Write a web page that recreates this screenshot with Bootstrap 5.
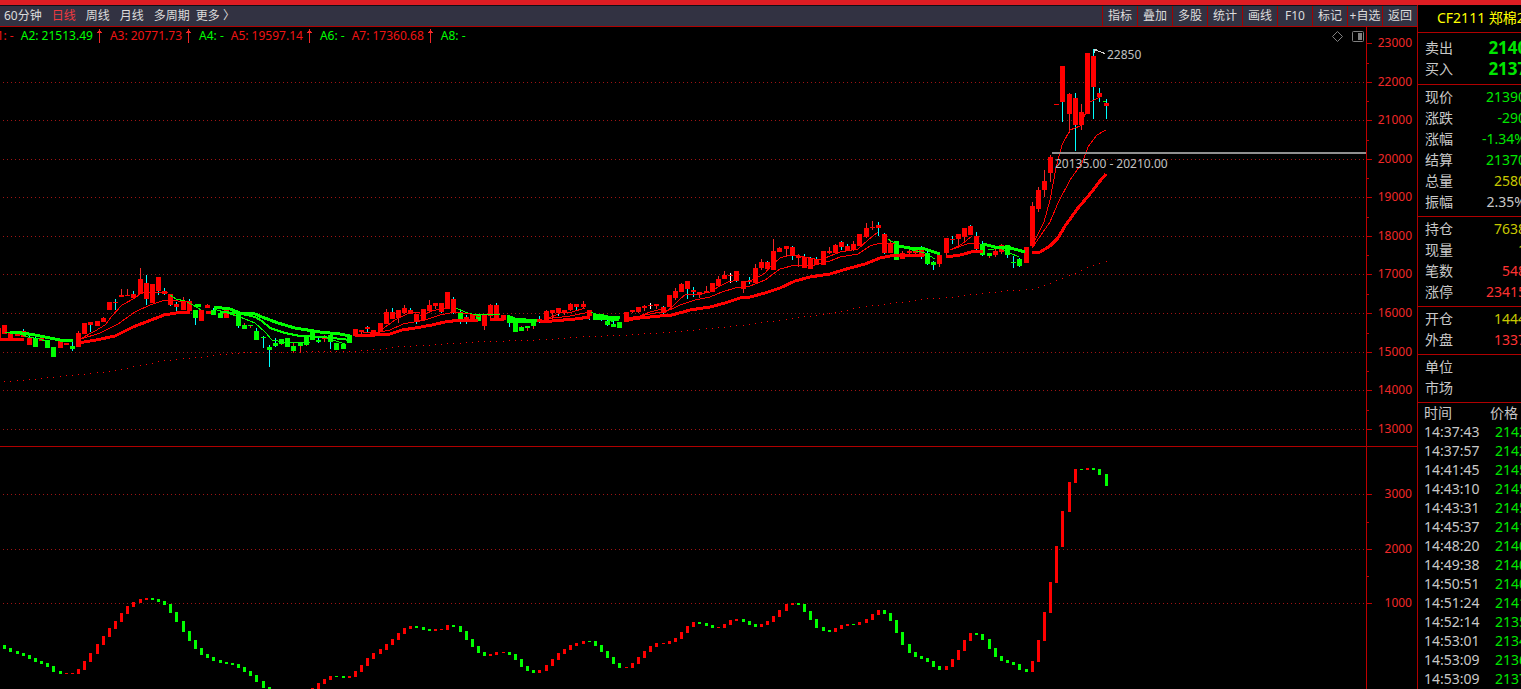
<!DOCTYPE html>
<html lang="zh-CN">
<head>
<meta charset="utf-8">
<meta name="viewport" content="width=device-width, initial-scale=1">
<title>CF2111 郑棉</title>
<link href="https://cdn.jsdelivr.net/npm/bootstrap@5.3.0/dist/css/bootstrap.min.css" rel="stylesheet">
<style>
body{background:#000;color:#c8c8c8;font-family:"Noto Sans","Noto Sans CJK SC",sans-serif;font-size:12px;line-height:18px}
.top-strip{height:5px;background:#dd1d23}
.tool-bar{height:22px;background:#323242;border-top:1px solid #101018;border-bottom:1px solid #b00000}
.tool-bar button{background:none;border:0;padding:0;color:#dcdcdc;line-height:20px;white-space:nowrap}
.tool-bar .period-on{color:#f03a40}
.periods{gap:10px;padding-left:4px}
.periods .more-btn{margin-left:-4px}
.tools button{width:35px;border-left:1px solid #a00000;overflow:hidden}
.plot-area svg,.axis svg{display:block}
.axis{width:51px;border-left:1px solid #c00000}
.split{border-bottom:1px solid #b00000}
.legend-row{top:0;left:-11px;gap:7px;white-space:pre}
.legend-row svg{margin:0 1px}
.up{color:#f01414}.dn{color:#0f0}
.corner-icons{top:3px;right:2px;gap:7px}
.side{width:104px;border-left:1px solid #b00000}
.side-inner{width:108px;font-size:14px;line-height:21px}
.contract{height:28px;padding-left:19px;color:#ff0;white-space:nowrap;line-height:25px;border-bottom:1px solid #b00000}
.quote-box{padding:1px 0 4px 7px;border-bottom:1px solid #b00000}
.quote-top{padding:4px 0 5px 7px}
.big-price{font-size:17px;font-weight:700;margin-right:-11px}
.g{color:#00e600}.r{color:#ff3232}.y{color:#c8c800}
.ticks{width:120px;table-layout:fixed;line-height:19px;border-collapse:collapse}
.ticks td,.ticks th{padding:0;font-weight:400;white-space:nowrap}
.ticks td:first-child,.ticks th:first-child{padding-left:6px;width:77px}
.ticks .price-head{display:block;margin-left:-5px}
svg text{font-size:12px}
</style>
</head>
<body>
<div class="vh-100 d-flex flex-column overflow-hidden">
  <div class="top-strip flex-shrink-0"></div>
  <div class="d-flex flex-grow-1 overflow-hidden">
    <main class="flex-grow-1 d-flex flex-column overflow-hidden">
      <nav class="tool-bar d-flex justify-content-between flex-shrink-0">
        <div class="periods d-flex">
          <button type="button">60分钟</button><button type="button" class="period-on">日线</button><button type="button">周线</button><button type="button">月线</button><button type="button">多周期</button><button type="button" class="more-btn">更多 〉</button>
        </div>
        <div class="tools d-flex">
          <button type="button">指标</button><button type="button">叠加</button><button type="button">多股</button><button type="button">统计</button><button type="button">画线</button><button type="button">F10</button><button type="button">标记</button><button type="button">+自选</button><button type="button">返回</button>
        </div>
      </nav>
      <section class="split d-flex flex-shrink-0">
        <div class="plot-area flex-grow-1 position-relative overflow-hidden">
          <svg id="price" width="100%" height="419" shape-rendering="crispEdges"></svg>
          <div class="legend-row position-absolute d-flex" id="legend"></div>
          <div class="corner-icons position-absolute d-flex">
            <svg width="13" height="13" fill="none" stroke="#808080"><path d="M6.500 1.500l5 5-5 5-5-5z"/></svg>
            <svg width="13" height="13" fill="none" stroke="#808080"><rect x="1.500" y="1.500" width="11" height="10" rx="1"/><path d="M7 3h4v7H7z" fill="#808080" stroke="none"/></svg>
          </div>
        </div>
        <div class="axis flex-shrink-0"><svg id="priceAxis" width="50" height="419" shape-rendering="crispEdges"></svg></div>
      </section>
      <section class="d-flex flex-grow-1 overflow-hidden">
        <div class="plot-area flex-grow-1 overflow-hidden"><svg id="osc" width="100%" height="100%" shape-rendering="crispEdges"></svg></div>
        <div class="axis flex-shrink-0"><svg id="oscAxis" width="50" height="100%" shape-rendering="crispEdges"></svg></div>
      </section>
    </main>
    <aside class="side flex-shrink-0 overflow-hidden">
      <div class="side-inner">
        <div class="contract">CF2111 郑棉2111</div>
        <div id="quotes"></div>
        <table class="ticks"><thead><tr><th>时间</th><th><span class="price-head">价格</span></th></tr></thead><tbody id="ticks"></tbody></table>
      </div>
    </aside>
  </div>
</div>
<script src="https://cdn.jsdelivr.net/npm/bootstrap@5.3.0/dist/js/bootstrap.bundle.min.js"></script>
<script>
const RED='#f00', GREEN='#0f0';
const barX = i => Math.floor(4.72 + i * 6.1525);

// body colour, body top-bottom, then wick colour (c cyan, r red, w white) and its top-bottom
const candles = `R325-334 R333-339 R333-336 R331-337c329-337 R338-345c335-338 G338-347c336-338 R338-341 G340-348 G347-357 R340-348 R343-345 G346-349c339-351 R333-347r331-347 R323-334 R322-325c325-332 R321-326 R318-322r317-322 R302-310 R302-303c299-310 R295-297r289-297
R295-296r289-296 R294-298c291-298 R279-294r268-294 R283-299c275-305 R284-303 R277-291c291-295 R291-294c288-295 R294-305c294-306 R304-307c302-312 R301-310r297-310 R301-311c299-311 G310-318c310-325 R310-321 R305-308r304-308 G310-315c308-315 G313-318 R310-318 R313-315 G313-326c313-328 G325-329r323-329
G325-326r326-328 G331-340c328-340 G337-338c336-348 G347-350c345-367 G343-346c338-347 G339-344r344-345 G338-347 G346-351r342-352 G342-346r346-352 G336-345r345-346 G331-340 G340-342c338-343 R337-339r335-342 G335-342c342-349 G343-350 G344-349 G335-343 R329-336 R330-332r332-334 R327-329c326-333
R330-333 R323-332 R312-324r309-324 R312-319c308-319 R310-318r318-323 R308-313r305-314 R310-314c308-314 R314-321c321-324 R309-320 R305-311r300-311 R303-306r306-309 R303-312c312-313 R292-309 R299-313c297-314 G313-322c311-324 R317-322c315-324 R314-321 G315-321c314-321 R314-326r326-330 R305-316r304-320
R305-320c303-320 R315-320 G316-323c323-327 G320-332 G327-331r326-331 G326-328r328-331 G321-326r326-329 R319-322c316-323 R311-320r310-320 R310-313r313-318 R308-313c313-316 R310-312r312-315 R304-310r303-311 R304-307c307-310 R304-307r301-308 R310-316c316-320 G314-320 G314-320c320-321 G321-325c320-326 G324-327c321-327
G322-328 R312-322 R310-312r312-313 R307-312r312-313 R306-308r305-311 R305-306w303-309 R304-306r306-309 R307-313c306-314 R295-307 R291-298r288-300 R284-292r283-292 R281-289c289-299 R290-292c287-297 R292-295r295-298 R291-293r286-293 R283-292 R279-286r276-287 R275-279r271-279 R275-276w273-283 R271-281c281-282
R281-289r289-293 R281-282c277-284 R268-283r264-283 R262-268r259-270 R262-269c261-271 R251-270r239-270 R248-252r247-252 R246-249r249-256 R247-256c246-260 R256-258r254-267 R257-268c254-268 R258-269c257-269 R259-265c257-265 R251-265 R251-253r247-254 R245-253r244-254 R242-247c241-250 R246-251c244-251 R244-250r241-251 R234-246
R228-237r223-238 R227-228r221-230 R225-228c222-236 R234-253c233-254 R243-253r241-253 G241-260 R253-259r251-259 R251-253r249-255 R249-253r253-255 R248-257c246-259 G253-264c251-265 G262-265c261-270 R255-264r264-267 R238-253r253-255 R239-240c236-244 R234-239r239-245 R228-237r237-241 R226-235c225-235 R236-249c232-250 G244-255c241-256
G253-256r256-258 R251-255r248-257 R245-252r244-254 G245-255c245-258 G262-263c256-268 G259-266c258-267 R247-263 R206-246r202-247 R190-209r187-212 R181-190r170-197 R157-173r155-182 R104-105 R66-102c102-122 R94-114r93-133 R98-125c93-151 R112-125r104-130 R53-114 R56-87c49-119 R93-97c88-102 R103-106c99-119`.trim().split(/\s+/);

// oscillator bars; a dot marks a bar below the visible range
const bars = `G645-649 G648-652 G651-654 G653-656 G655-659 G658-662 G661-664 G663-667 G666-672 G671-674 R673-674 R673-674 R669-674 R661-670 R653-662 R644-654 R636-645 R628-637 R621-629 R613-622
R606-614 R602-607 R599-603 R598-600 G598-600 G599-602 G601-605 G604-613 G612-622 G621-632 G631-641 G640-649 G648-655 G654-658 G657-661 G660-663 G662-664 G663-665 G664-668 G667-672
G671-676 G675-682 G681-688 G687-692 . . . . . . R688-692 R683-689 R679-684 R676-680 G676-677 G676-678 R676-678 R671-677 R665-672 R658-666
R653-659 R649-654 R644-650 R639-645 R633-640 R628-634 R626-629 G626-628 G627-630 G629-631 R629-631 R629-630 R625-630 G625-627 G626-632 G631-640 G639-647 G646-653 G652-656 R654-656
R652-655 R652-653 G652-655 G654-660 G659-667 G666-671 G670-673 R670-673 R665-671 R659-666 R653-660 R649-654 R645-650 R643-646 R641-644 G641-642 G641-646 G645-652 G651-658 G657-664
G663-668 R667-668 R663-668 R657-664 R651-658 R646-652 R643-647 R643-644 R641-644 R638-642 R632-639 R626-633 R622-627 G622-624 G623-626 G625-628 R627-628 R624-628 R620-625 R619-621
G619-622 G621-625 G624-627 R624-627 R621-625 R616-622 R610-617 R604-611 R603-605 G603-605 G604-612 G611-620 G619-628 G627-631 G630-632 R628-632 R625-629 R624-626 G624-625 R622-625
R619-623 R614-620 R610-615 G610-614 G613-621 G620-633 G632-645 G644-653 G652-657 G656-659 G658-662 G661-667 G666-670 R666-670 R659-667 R650-660 R640-651 R633-641 G633-635 G634-640
G639-649 G648-657 G656-661 G660-663 G662-665 G664-670 G669-672 R661-672 R640-662 R612-641 R582-613 R546-583 R511-547 R482-512 R469-483 G469-470 R468-470 G468-470 G469-475 G474-486`.trim().split(/\s+/);

// moving averages: colour, stroke width, points
const lines = [
 ['R',3,'0,340 24,339'],['R',3,'78,343 84,342 96,340 115,336 121,333 133,327 146,322 164,315 176,313 190,312'],['R',3,'206,312 211,312'],
 ['R',3,'355,335 361,336 390,334 402,330 415,328 432,325 445,322 460,320 478,321'],['R',3,'490,320 504,319'],['R',3,'540,321 552,321 575,319 590,317'],
 ['R',3,'626,320 640,318 660,316 672,315 690,310 710,307 725,303 740,298 750,297 765,293 780,288 795,281 810,277 830,274 850,268 865,264 880,258 890,256 925,255'],
 ['R',3,'946,257 960,255 975,251 983,251'],['R',3,'1032,253 1040,252 1050,246 1058,238 1065,226 1078,208 1090,194 1100,181 1106,174'],
 ['G',3,'10,332 22,333 35,335 50,338 60,340 73,341'],['G',3,'195,305 201,306'],['G',3,'214,307 230,309 240,313 255,314 262,317 278,323 295,328 320,332 340,334 350,336'],
 ['G',2,'220,312 238,313 255,317 262,321 270,328 285,333 300,336 320,337 333,338 350,340'],
 ['G',3,'507,316 515,319 537,321'],['G',3,'512,321 532,322'],['G',3,'594,315 608,317 620,318'],['G',3,'597,318 619,320'],
 ['G',3,'898,246 910,248 925,249 940,254'],['G',3,'983,244 995,247 1007,247 1025,252'],
 ['G',1,'5,332 18,333 28,337 40,339 50,343'],['G',1,'170,295 176,299 185,301 193,305 201,310'],['G',1,'214,309 240,317 255,323 265,332 272,340 290,343 310,342'],['G',1,'330,339 345,344'],
 ['G',1,'456,308 465,312 475,315 500,314'],['G',1,'591,312 600,316 613,322'],['G',1,'888,239 896,244 912,250 925,253 935,259'],['G',1,'988,250 1000,248 1010,253 1019,257'],
 ['R',1,'78,340 95,331 105,325 112,316 122,305 135,298 141,293 155,292 168,293'],['R',1,'78,340 100,333 118,324 135,312 150,305 165,300 190,302'],
 ['R',1,'363,333 378,332 388,325 395,320 405,315 412,312 420,312'],['R',1,'370,334 390,330 403,324 425,320 440,315 455,312 470,314 480,317'],['R',1,'420,316 432,311 440,309 450,307'],
 ['R',1,'545,320 560,313 572,312 585,308'],['R',1,'545,319 570,316 590,312'],
 ['R',1,'626,318 640,316 650,312 662,309'],['R',1,'626,319 655,313 665,312 672,307 680,299 686,294 700,294 710,292 718,287 728,282 738,280'],
 ['R',1,'745,282 755,279 765,273 772,265 780,258 790,255 800,256 820,260 840,252 858,249 868,240 878,232'],
 ['R',1,'663,313 680,305 695,300 710,297 722,292 735,288 750,286 765,280 772,275 780,269 795,265 815,265 830,261 840,257 858,254 870,246 880,243 895,243'],
 ['R',1,'950,250 962,244 972,236'],['R',1,'950,250 970,243 980,243'],
 ['R',1,'1032,246 1044,222 1050,200 1056,168 1062,145 1070,130 1080,126 1084,117 1090,102 1100,97'],['R',1,'1032,248 1050,222 1058,203 1070,180 1082,163 1088,147 1097,135 1106,130']
];
const slow = [[4,381],[20,380],[50,377],[80,374],[100,372],[120,369],[140,365],[160,361],[180,358],[200,357],[220,354],[250,352],[350,351],[380,349],[400,346],[440,344],[480,341],[530,340],[560,338],[590,336],[620,335],[650,333],[680,331],[700,329],[720,327],[740,325],[760,322],[780,320],[800,317],[820,314],[840,311],[865,306],[900,302],[930,298],[950,297],[980,293],[1010,290],[1030,289],[1040,287],[1056,280],[1075,273],[1090,266],[1106,261]];

const rect = (x,y,w,h,c) => `<rect x="${x}" y="${y}" width="${w}" height="${h}" fill="${c}"/>`;
const fillOf = s => s[0] === 'R' ? RED : GREEN;
const grid = y => `<line x1="3" x2="100%" y1="${y + .5}" y2="${y + .5}" stroke="#a01414" stroke-dasharray="1 3"/>`;
const price = document.getElementById('price');

let s = '<g transform="translate(0 -27)">';
[82,120,159,197,236,274,313,352,390,429].forEach(y => s += grid(y));
let k = 0;
for (let i = 0; i < 180; i++) {
  const x = barX(i);
  while (k < slow.length - 2 && slow[k + 1][0] < x) k++;
  const [a, b] = [slow[k], slow[k + 1]];
  s += rect(x, Math.round(a[1] + (b[1] - a[1]) * (x - a[0]) / (b[0] - a[0])), 1, 1, '#f00');
}
s += rect(0, 328, 1, 10, RED);
const wick = {c:'#0ff', r:'#f02828', w:'#fff'};
candles.forEach((d, i) => {
  const m = d.match(/^[RG](\d+)-(\d+)(?:([crw])(\d+)-(\d+))?/), x = barX(i);
  if (m[3]) s += rect(x, m[4], 1, m[5] - m[4], wick[m[3]]);
  s += rect(x - 2, m[1], 5, m[2] - m[1], fillOf(d));
});
s += rect(1103, 101, 3, 1, GREEN);
lines.forEach(l => s += `<polyline points="${l[2]}" fill="none" stroke="${fillOf(l[0])}" stroke-width="${l[1]}"/>`);
s += '<line x1="1052" x2="100%" y1="153" y2="153" stroke="#909090" stroke-width="2"/>';
s += '<path d="M1094 53v-4h3M1095 50l10 3.500" fill="none" stroke="#d0d0d0"/>';
s += '<text x="1107" y="59" fill="#c0c0c0">22850</text><text x="1055" y="168" fill="#c0c0c0">20135.00 - 20210.00</text></g>';
price.innerHTML = s;

s = '<g transform="translate(0 -447)">';
[494,549,603].forEach(y => s += grid(y));
bars.forEach((d, i) => {
  if (d === '.') return;
  const [t, b] = d.slice(1).split('-');
  s += rect(barX(i) - 1, t, 3, b - t, fillOf(d));
});
document.getElementById('osc').innerHTML = s + '</g>';

function axis(id, offset, major, minor) {
  let out = `<g transform="translate(0 ${-offset})">`;
  major.forEach(([y, t]) => out += rect(0, y, 5, 1, '#c00000') + `<text x="45" y="${y + 4}" text-anchor="end" fill="#f02828">${t}</text>`);
  minor.forEach(y => out += rect(0, y, 2, 1, '#c00000'));
  document.getElementById(id).innerHTML = out + '</g>';
}
axis('priceAxis', 27, [43,82,120,159,197,236,274,313,352,390,429].map((y, i) => [y, 23000 - i * 1000]), [63,101,140,178,217,255,294,333,371,410]);
axis('oscAxis', 447, [[494,3000],[549,2000],[603,1000]], [522,576]);

const arrow = '<svg width="8" height="16"><path d="M5.500 2v14M3 5.500h5M4 4.500h3" stroke="#f02828" fill="none" shape-rendering="crispEdges"/></svg>';
document.getElementById('legend').innerHTML = [['A1: -','up'],['A2: 21513.49','dn',1],['A3: 20771.73','up',1],['A4: -','dn'],['A5: 19597.14','up',1],['A6: -','dn'],['A7: 17360.68','up',1],['A8: -','dn']]
  .map(([t, c, a]) => `<span class="d-flex ${c}">${t}${a ? arrow : ''}</span>`).join('');

const groups = [
 [['卖出','21400','g'],['买入','21375','g']],
 [['现价','21390','g'],['涨跌','-290','g'],['涨幅','-1.34%','g'],['结算','21370','g'],['总量','2580','y'],['振幅','2.35%','']],
 [['持仓','7638','y'],['现量','1','y'],['笔数','548','r'],['涨停','23415','r']],
 [['开仓','1444','y'],['外盘','1337','r']],
 [['单位','',''],['市场','','']]];
document.getElementById('quotes').innerHTML = groups.map((g, n) => `<div class="quote-box ${n ? '' : 'quote-top'}">` +
  g.map(([l, v, c]) => `<div class="d-flex justify-content-between"><span>${l}</span><span class="${c} ${n ? '' : 'big-price'}">${v}</span></div>`).join('') + '</div>').join('');
document.getElementById('ticks').innerHTML = [['14:37:43','21420'],['14:37:57','21420'],['14:41:45','21450'],['14:43:10','21450'],['14:43:31','21450'],['14:45:37','21415'],['14:48:20','21400'],['14:49:38','21400'],['14:50:51','21400'],['14:51:24','21415'],['14:52:14','21355'],['14:53:01','21345'],['14:53:09','21365'],['14:53:09','21375']]
  .map(([t, p]) => `<tr><td>${t}</td><td class="g">${p}</td></tr>`).join('');
</script>
</body>
</html>
